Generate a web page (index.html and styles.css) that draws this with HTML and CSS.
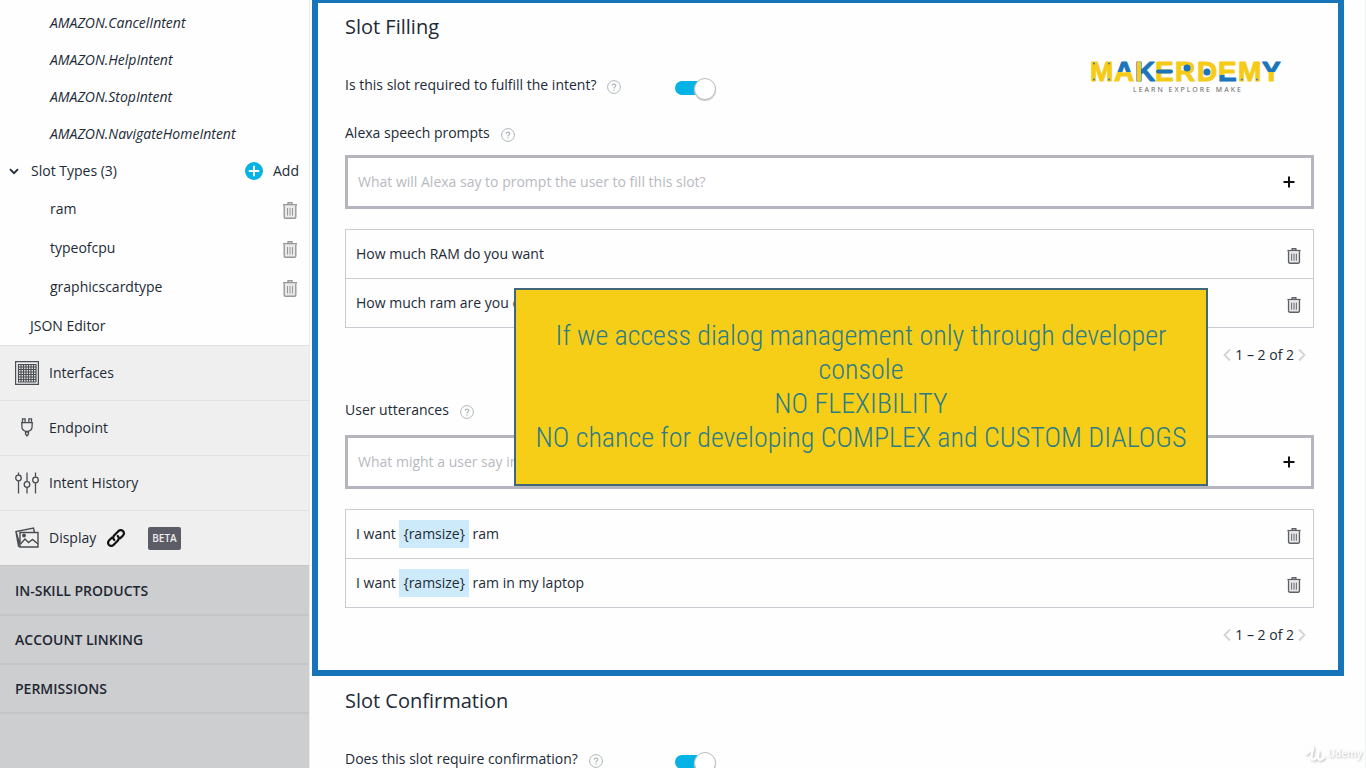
FILE: index.html
```html
<!DOCTYPE html>
<html lang="en">
<head>
<meta charset="utf-8">
<meta name="viewport" content="width=device-width, initial-scale=1">
<title>Slot Filling</title>
<link rel="stylesheet" href="styles.css">
</head>
<body>
<svg width="0" height="0" class="defs" aria-hidden="true">
  <symbol id="trash" viewBox="0 0 14 17">
    <path d="M5 2V.8h4V2" fill="none" stroke="currentColor" stroke-width="1.4"/>
    <path d="M0 2.800h14" stroke="currentColor" stroke-width="1.600"/>
    <path d="M1.200 3.500V15q0 1.200 1.200 1.200h9.200q1.200 0 1.200-1.200V3.500" fill="#e9e9ea" stroke="currentColor" stroke-width="1.400"/>
    <path d="M4.500 6v7.500M7 6v7.500M9.500 6v7.500" fill="none" stroke="currentColor" stroke-width="1"/>
  </symbol>
  <symbol id="help" viewBox="0 0 14 14">
    <circle cx="7" cy="7" r="6.400" fill="none" stroke="currentColor" stroke-width="1"/>
    <path d="M5.200 5.700Q5.300 4.100 7 4.100T8.800 5.600Q8.800 6.500 7.800 7Q7 7.500 7 8.400M7 9.500v1.200" fill="none" stroke="currentColor" stroke-width="1.200"/>
  </symbol>
  <symbol id="plus" viewBox="0 0 12 12"><path d="M6 .5v11M.5 6h11" stroke="currentColor" stroke-width="2" fill="none"/></symbol>
  <symbol id="prev" viewBox="0 0 8 14"><path d="M7 1.500 1.500 7 7 12.500" stroke="currentColor" stroke-width="1.800" fill="none"/></symbol>
  <symbol id="next" viewBox="0 0 8 14"><path d="M1 1.500 6.500 7 1 12.500" stroke="currentColor" stroke-width="1.800" fill="none"/></symbol>
</svg>

<div class="app">
  <nav class="sidebar" aria-label="Skill builder">
    <ul class="tree">
      <li class="tree-row intent"><a href="#cancel">AMAZON.CancelIntent</a></li>
      <li class="tree-row intent"><a href="#help-intent">AMAZON.HelpIntent</a></li>
      <li class="tree-row intent"><a href="#stop">AMAZON.StopIntent</a></li>
      <li class="tree-row intent"><a href="#home">AMAZON.NavigateHomeIntent</a></li>
      <li class="tree-row group">
        <button class="group-toggle" type="button" aria-expanded="true">
          <svg class="chevron" viewBox="0 0 10 7" aria-hidden="true"><path d="M1 1.200 5 5.200 9 1.200" fill="none" stroke="currentColor" stroke-width="1.800"/></svg>
          Slot Types (3)
        </button>
        <button class="add" type="button">
          <svg class="add-icon" viewBox="0 0 18 18" aria-hidden="true"><circle cx="9" cy="9" r="9" fill="#05b2e6"/><path d="M9 3.800v10.400M3.800 9h10.400" stroke="#fff" stroke-width="2"/></svg>
          Add
        </button>
      </li>
      <li class="tree-row slot"><a href="#ram">ram</a><button class="remove" type="button" aria-label="Delete ram"><svg class="trash"><use href="#trash"/></svg></button></li>
      <li class="tree-row slot"><a href="#typeofcpu">typeofcpu</a><button class="remove" type="button" aria-label="Delete typeofcpu"><svg class="trash"><use href="#trash"/></svg></button></li>
      <li class="tree-row slot"><a href="#graphicscardtype">graphicscardtype</a><button class="remove" type="button" aria-label="Delete graphicscardtype"><svg class="trash"><use href="#trash"/></svg></button></li>
      <li class="tree-row editor"><a href="#json">JSON Editor</a></li>
    </ul>

    <ul class="tools">
      <li><a class="tool" href="#interfaces">
        <svg class="tool-icon" viewBox="0 0 24 24" fill="none" stroke="currentColor" aria-hidden="true"><path d="M.6.6h22.800v22.800H.6z" stroke-width="1.200"/><path d="M3 3.500h18M3 6h18M3 8.500h18M3 11h18M3 13.500h18M3 16h18M3 18.500h18M3 21h18M3.500 3v18M6 3v18M8.500 3v18M11 3v18M13.500 3v18M16 3v18M18.500 3v18M21 3v18" stroke-width="1.200"/></svg>
        Interfaces</a></li>
      <li><a class="tool" href="#endpoint">
        <svg class="tool-icon" viewBox="0 0 24 24" fill="none" stroke="currentColor" stroke-width="1.300" aria-hidden="true"><path d="M7.500 6.500V2.800h2.600v3.700M13.900 6.500V2.800h2.600v3.700M6 6.700h12M6.900 7v3.500q0 4.500 5.100 5 5.100-.5 5.100-5V7"/><path d="M10.500 16h3v2l-1.500 2-1.500-2zM12 19v2"/></svg>
        Endpoint</a></li>
      <li><a class="tool" href="#history">
        <svg class="tool-icon" viewBox="0 0 24 24" fill="none" stroke="currentColor" stroke-width="1.300" aria-hidden="true"><path d="M3.500 1.500v2.700M3.500 10v12.500M12 1.500v9M12 16.500v6M20.500 1.500v4.700M20.500 12v10.500"/><circle cx="3.500" cy="7" r="2.800"/><circle cx="12" cy="13.500" r="2.800"/><circle cx="20.500" cy="9" r="2.800"/></svg>
        Intent History</a></li>
      <li><a class="tool" href="#display">
        <svg class="tool-icon" viewBox="0 0 24 24" fill="none" stroke="currentColor" stroke-width="1.400" aria-hidden="true"><path d="M5 6.500h18v14.500H5zM5 19 1 5.500l17.500-3.500 1 4.500M5 21 3.500 20 1 6"/><path d="m5.500 18 4.500-5 3.500 3.500 4-3L23 18"/><circle cx="9" cy="9.500" r="1.200" fill="currentColor"/></svg>
        Display
        <svg class="link-icon" viewBox="0 0 20 20" fill="none" stroke="#111" stroke-width="2.200" stroke-linecap="round" aria-hidden="true"><path d="M8.300 12q-2.300-2.300 0-4.800l4-4q2.500-2.200 4.700-.2 2 2.200-.2 4.700l-2.600 2.600"/><path d="M11.700 8q2.300 2.300 0 4.800l-4 4q-2.500 2.200-4.700.2-2-2.200.2-4.700l2.600-2.600"/></svg>
        <span class="beta">BETA</span></a></li>
    </ul>

    <ul class="sections">
      <li><a class="section-link" href="#products">IN-SKILL PRODUCTS</a></li>
      <li><a class="section-link" href="#linking">ACCOUNT LINKING</a></li>
      <li><a class="section-link" href="#permissions">PERMISSIONS</a></li>
    </ul>
  </nav>

  <main class="main">
    <section class="frame">
      <svg class="logo" viewBox="0 -6 194 46" role="img" aria-label="Makerdemy, learn explore make">
        <defs>
          <linearGradient id="top-blue" x1="0" y1="0" x2="0" y2="1"><stop offset=".52" stop-color="#1c74bb"/><stop offset=".52" stop-color="#f6cb18"/></linearGradient>
          <linearGradient id="low-blue" x1="0" y1="0" x2="0" y2="1"><stop offset=".62" stop-color="#f6cb18"/><stop offset=".62" stop-color="#1c74bb"/></linearGradient>
        </defs>
        <g class="wordmark">
          <text x="0" y="22" class="yellow">M</text>
          <text x="24" y="22" fill="url(#top-blue)" stroke="url(#top-blue)">A</text>
          <text x="45" y="22" class="blue">K</text>
          <text x="65" y="22" class="yellow">E</text>
          <text x="85" y="22" class="yellow">R</text>
          <text x="107" y="22" class="yellow">D</text>
          <text x="128" y="22" fill="url(#low-blue)" stroke="url(#low-blue)">E</text>
          <text x="148" y="22" class="yellow">M</text>
          <text x="172" y="22" fill="url(#top-blue)" stroke="url(#top-blue)">Y</text>
        </g>
        <path d="M49 4v17" stroke="#f6cb18" stroke-width="4" stroke-linecap="round"/>
        <path d="M68 12.500h13" stroke="#1c74bb" stroke-width="4" stroke-linecap="round"/>
        <g fill="#1c74bb"><circle cx="97" cy="9" r="3.500"/><circle cx="117" cy="13" r="3.500"/><circle cx="4" cy="4.500" r=".9"/><circle cx="4" cy="20.500" r=".9"/><circle cx="19" cy="4.500" r=".9"/><circle cx="19" cy="20.500" r=".9"/><circle cx="152" cy="20.500" r=".9"/><circle cx="167" cy="20.500" r=".9"/></g>
        <text x="43" y="33" class="tagline">LEARN EXPLORE MAKE</text>
      </svg>

      <h2 class="title">Slot Filling</h2>
      <div class="question">
        <label for="required">Is this slot required to fulfill the intent? <svg class="help" aria-hidden="true"><use href="#help"/></svg></label>
        <input class="switch" type="checkbox" role="switch" id="required" checked>
      </div>

      <div class="field">
        <label class="field-label" for="prompt">Alexa speech prompts <svg class="help" aria-hidden="true"><use href="#help"/></svg></label>
        <div class="entry">
          <input id="prompt" type="text" placeholder="What will Alexa say to prompt the user to fill this slot?">
          <button type="button" aria-label="Add prompt"><svg class="plus"><use href="#plus"/></svg></button>
        </div>
        <ul class="list">
          <li><span>How much RAM do you want</span><button class="remove" type="button" aria-label="Delete prompt"><svg class="trash"><use href="#trash"/></svg></button></li>
          <li><span>How much ram are you expecting</span><button class="remove" type="button" aria-label="Delete prompt"><svg class="trash"><use href="#trash"/></svg></button></li>
        </ul>
        <div class="pager"><button type="button" aria-label="Previous"><svg class="arrow"><use href="#prev"/></svg></button><span>1 – 2 of 2</span><button type="button" aria-label="Next"><svg class="arrow"><use href="#next"/></svg></button></div>
      </div>

      <div class="field utterances">
        <label class="field-label" for="utterance">User utterances <svg class="help" aria-hidden="true"><use href="#help"/></svg></label>
        <div class="entry">
          <input id="utterance" type="text" placeholder="What might a user say in response">
          <button type="button" aria-label="Add utterance"><svg class="plus"><use href="#plus"/></svg></button>
        </div>
        <ul class="list">
          <li><span>I want <mark>{ramsize}</mark> ram</span><button class="remove" type="button" aria-label="Delete utterance"><svg class="trash"><use href="#trash"/></svg></button></li>
          <li><span>I want <mark>{ramsize}</mark> ram in my laptop</span><button class="remove" type="button" aria-label="Delete utterance"><svg class="trash"><use href="#trash"/></svg></button></li>
        </ul>
        <div class="pager"><button type="button" aria-label="Previous"><svg class="arrow"><use href="#prev"/></svg></button><span>1 – 2 of 2</span><button type="button" aria-label="Next"><svg class="arrow"><use href="#next"/></svg></button></div>
      </div>

      <aside class="callout">
        <p>If we access dialog management only through developer<br>console</p>
        <p>NO FLEXIBILITY</p>
        <p>NO chance for developing COMPLEX and CUSTOM DIALOGS</p>
      </aside>
    </section>

    <section class="confirmation">
      <h2 class="title">Slot Confirmation</h2>
      <div class="question">
        <label for="confirm">Does this slot require confirmation? <svg class="help" aria-hidden="true"><use href="#help"/></svg></label>
        <input class="switch" type="checkbox" role="switch" id="confirm" checked>
      </div>
    </section>
  </main>

  <div class="watermark">
    <svg viewBox="0 0 20 16" aria-hidden="true"><path d="M1 8Q4 7 6 3q2-3 2 0L6.500 9.500Q6 14 9 13.500 12 12.500 13.500 5L13 11q.5 3.500 3 2.500l3-2" fill="none" stroke="currentColor" stroke-width="2.500" stroke-linecap="round"/></svg>
    <span>Udemy</span>
  </div>
</div>
</body>
</html>
```

FILE: styles.css
```css
* { box-sizing: border-box; }

body {
  margin: 0;
  font: 14px/20px "Open Sans", "Noto Sans", sans-serif;
  color: #222a36;
  background: #fefefe;
}

ul, h2, p { margin: 0; padding: 0; }
ul { list-style: none; }
a { color: inherit; text-decoration: none; }
button { padding: 0; border: 0; background: none; color: inherit; font: inherit; cursor: pointer; }
svg { display: block; flex: none; }
.defs { position: absolute; }

.app {
  display: grid;
  grid-template-columns: 310px 1fr;
  height: 100vh;
  overflow: hidden;
}

/* Sidebar */
.sidebar {
  display: flex;
  flex-direction: column;
  border-right: 1px solid #e8eaec;
}
.tree { padding-top: 4px; }
.tree-row { display: flex; align-items: center; justify-content: space-between; height: 37px; }
.intent { padding-left: 50px; font-style: italic; }
.group { padding: 0 10px 0 9px; }
.group-toggle, .add { display: flex; align-items: center; gap: 12px; }
.chevron { width: 10px; height: 7px; margin-top: 2px; }
.add { gap: 10px; }
.add-icon { width: 18px; height: 18px; }
.slot { height: 39px; padding: 0 12px 0 50px; }
.editor { height: 39px; padding-left: 30px; }
.trash { width: 14px; height: 17px; margin-top: 3px; }
.slot .trash { color: #96989b; }

.tools { background: #efefef; }
.tool {
  display: flex;
  align-items: center;
  gap: 10px;
  height: 55px;
  padding-left: 15px;
  border-top: 1px solid #e0e1e2;
}
.tool-icon { width: 24px; height: 24px; color: #4a4d52; }
.link-icon { width: 20px; height: 20px; }
.beta {
  margin-left: 12px;
  padding: 0 4px;
  border-radius: 2px;
  background: #5c5c66;
  color: #eee;
  font-size: 10px;
  font-weight: 600;
  line-height: 23px;
}

.sections { flex: 1; padding-top: 1px; background: #cccecf; border-top: 1px solid #c4c6c7; }
.section-link {
  display: flex;
  align-items: center;
  height: 49px;
  padding-left: 15px;
  border-bottom: 2px solid #c3c5c6;
  color: #1f2733;
  font-weight: 600;
}

/* Main column */
.main { padding: 0 21px 0 2px; border-right: 1px solid #f0f1f2; }
.frame {
  position: relative;
  margin-top: -3px;
  padding: 10px 24px 25px 27px;
  border: 6px solid #1774b9;
}
.title { font-size: 20px; font-weight: 400; line-height: 28px; }
.question { display: grid; grid-template-columns: 329px auto; justify-content: start; align-items: center; height: 40px; margin-top: 24px; }
.question label, .field-label { display: flex; align-items: center; gap: 11px; }
.help { width: 14px; height: 14px; margin-top: 3px; color: #aeb6b9; }

.switch { position: relative; width: 42px; height: 20px; margin: 5px 0 0; appearance: none; }
.switch::before { content: ""; position: absolute; inset: 3px 4px 3px 1px; border-radius: 7px; background: #05b2e6; }
.switch::after { content: ""; position: absolute; top: 0; right: 0; width: 20px; height: 20px; border: 1px solid #b9bcc4; border-radius: 50%; background: #fff; box-shadow: 0 1px 1px #ccc; }

.field { margin-top: 16px; }
.field-label { height: 24px; margin-bottom: 10px; }
.utterances { margin-top: 33px; }
.utterances .field-label { margin-bottom: 13px; }
.entry { display: flex; height: 54px; border: 3px solid #b5b5bf; background: #fff; }
.entry input { flex: 1; min-width: 0; padding: 0 10px; border: 0; background: none; color: inherit; font: inherit; }
.entry input::placeholder { color: #b7b9c0; opacity: 1; }
.entry button { padding: 0 16px; color: #111; }
.plus { width: 12px; height: 12px; }

.list { margin-top: 20px; border: 1px solid #cbccd1; border-top: 0; }
.list li { display: flex; align-items: center; justify-content: space-between; height: 49px; padding: 0 12px 0 10px; border-top: 1px solid #cbccd1; }
.list .trash { height: 16px; color: #5c5f63; }
mark { display: inline-block; padding: 4px; background: #cdeafb; color: inherit; }

.pager { display: flex; justify-content: flex-end; align-items: center; gap: 4px; height: 20px; margin-top: 17px; padding-right: 8px; }
.arrow { width: 8px; height: 14px; color: #d3d4d6; }

.confirmation { padding: 11px 30px 0 33px; }

/* Overlays */
.logo { position: absolute; top: 50px; right: 54px; width: 194px; height: 46px; }
.wordmark { font: 700 28px "Liberation Sans", sans-serif; stroke-width: 1; stroke-linejoin: round; }
.yellow { fill: #f6cb18; stroke: #f6cb18; }
.blue { fill: #1c74bb; stroke: #1c74bb; }
.tagline { font: 7px "Noto Sans", sans-serif; letter-spacing: 2px; fill: #666; }

.callout {
  position: absolute;
  top: 285px;
  left: 196px;
  right: 130px;
  display: flex;
  flex-direction: column;
  justify-content: center;
  height: 198px;
  border: 2px solid #40667a;
  background: #f7ce17;
  color: #2c7c86;
  font: 300 28px/34px "Roboto Condensed", "Open Sans Condensed", "Roboto", sans-serif;
  text-align: center;
}

.watermark {
  position: fixed;
  right: 4px;
  bottom: 6px;
  display: flex;
  align-items: center;
  gap: 3px;
  color: #fff;
  font-size: 10px;
  font-weight: 600;
  line-height: 17px;
  filter: drop-shadow(1px 1px 1px #bbb);
}
.watermark svg { width: 20px; height: 16px; }
```
